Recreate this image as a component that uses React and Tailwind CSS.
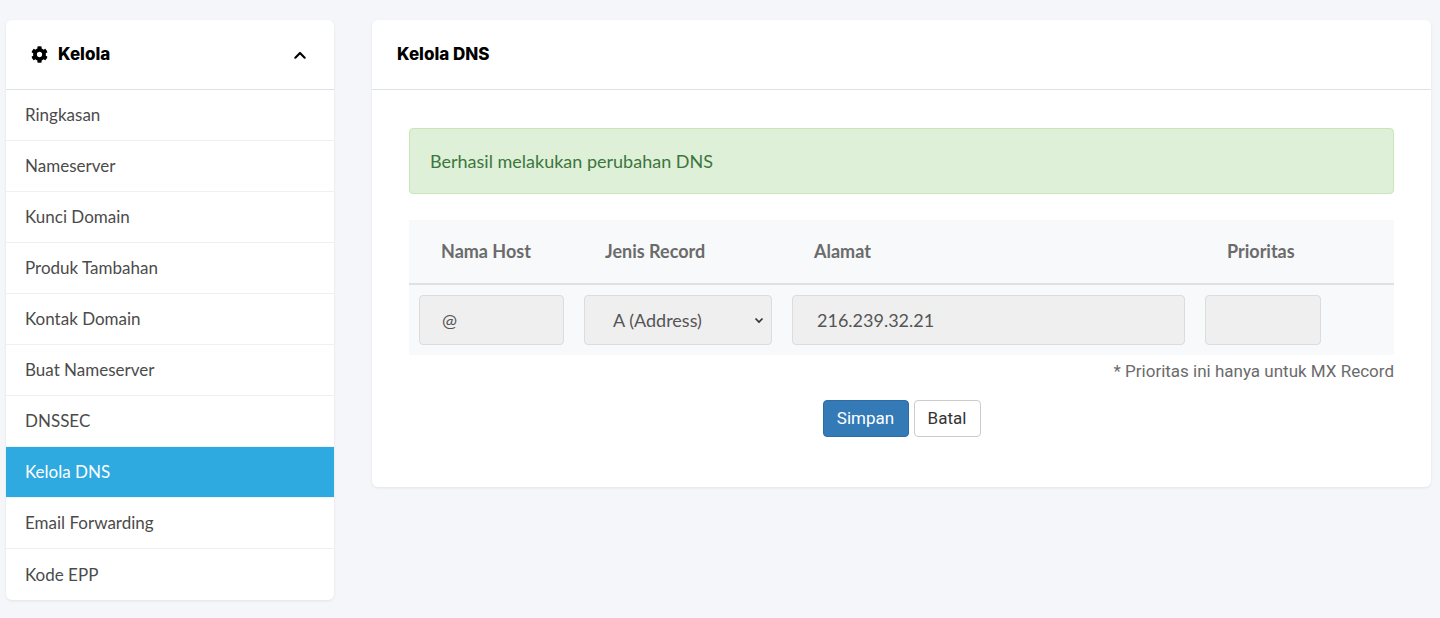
import React from "react";

const items = ["Ringkasan","Nameserver","Kunci Domain","Produk Tambahan","Kontak Domain","Buat Nameserver","DNSSEC","Kelola DNS","Email Forwarding","Kode EPP"];

export default function App() {
  return (
    <div className="min-h-[618px] bg-[#f4f6f9] flex items-start pt-5 pl-[6px] gap-[38px]" style={{fontFamily:"Lato, sans-serif"}}>
      <div className="w-[328px] bg-white rounded-md shadow-[0_1px_3px_rgba(0,0,0,0.08)] overflow-hidden">
        <div className="h-[70px] flex items-center justify-between pl-[25px] pr-[26px] border-b border-[#dee2e6]">
          <div className="flex items-center gap-[10px]">
            <svg width="17" height="17" viewBox="0 0 512 512"><path fill="#000" d="M487.4 315.7l-42.6-24.6c4.3-23.2 4.3-47 0-70.2l42.6-24.6c4.9-2.8 7.1-8.6 5.5-14-11.1-35.6-30-67.8-54.7-94.6-3.8-4.1-10-5.1-14.8-2.3L380.8 110c-17.9-15.4-38.5-27.3-60.8-35.1V25.8c0-5.6-3.9-10.5-9.4-11.7-36.7-8.2-74.3-7.8-109.2 0-5.5 1.2-9.4 6.1-9.4 11.7V75c-22.2 7.9-42.8 19.8-60.8 35.1L88.7 85.5c-4.9-2.8-11-1.9-14.8 2.3-24.7 26.7-43.6 58.9-54.7 94.6-1.7 5.4.6 11.2 5.5 14L67.3 221c-4.3 23.2-4.3 47 0 70.2l-42.6 24.6c-4.9 2.8-7.1 8.6-5.5 14 11.1 35.6 30 67.8 54.7 94.6 3.8 4.1 10 5.1 14.8 2.3l42.6-24.6c17.9 15.4 38.5 27.3 60.8 35.1v49.2c0 5.6 3.9 10.5 9.4 11.7 36.7 8.2 74.3 7.8 109.2 0 5.5-1.2 9.4-6.1 9.4-11.7v-49.2c22.2-7.9 42.8-19.8 60.8-35.1l42.6 24.6c4.9 2.8 11 1.9 14.8-2.3 24.7-26.7 43.6-58.9 54.7-94.6 1.5-5.5-.7-11.3-5.6-14.1zM256 336c-44.1 0-80-35.9-80-80s35.9-80 80-80 80 35.9 80 80-35.9 80-80 80z"/></svg>
            <span className="text-[17px] font-extrabold text-black" style={{fontFamily:"Inter, sans-serif"}}>Kelola</span>
          </div>
          <svg width="16" height="16" viewBox="0 0 24 24" fill="none" stroke="#000" strokeWidth="3.2" strokeLinecap="round" strokeLinejoin="round"><path d="M5 16l7-7 7 7"/></svg>
        </div>
        {items.map((t,i)=>(
          <div key={t} className={`h-[51px] flex items-center px-[19px] text-[17px] ${i<items.length-1?"border-b border-[#eef0f2]":""} ${t==="Kelola DNS"?"bg-[#2eaae1] text-white":"text-[#4b4b4b]"}`}>{t}</div>
        ))}
      </div>
      <div className="w-[1059px] bg-white rounded-md shadow-[0_1px_3px_rgba(0,0,0,0.08)]">
        <div className="h-[70px] flex items-center px-[25px] border-b border-[#dee2e6]">
          <span className="text-[17px] font-extrabold text-black" style={{fontFamily:"Inter, sans-serif"}}>Kelola DNS</span>
        </div>
        <div className="pt-[38px] pb-[50px] px-[37px]">
          <div className="h-[66px] bg-[#dff0d8] border border-[#c8e5bc] rounded-sm flex items-center px-5 text-[18px] text-[#3c763d]">Berhasil melakukan perubahan DNS</div>
          <div className="mt-[26px] bg-[#f8f9fa]">
            <div className="h-[65px] flex items-center text-[18px] font-bold text-[#6b6b6b] border-b-2 border-[#dee2e6]">
              <div className="w-[175px] pl-[32px]">Nama Host</div>
              <div className="w-[210px] pl-[21px]">Jenis Record</div>
              <div className="w-[413px] pl-[20px]">Alamat</div>
              <div className="pl-[20px]">Prioritas</div>
            </div>
            <div className="h-[70px] flex items-center pl-[10px] text-[18px] text-[#555]">
              <div className="w-[145px] h-[50px] bg-[#efefef] border border-[#dcdcdc] rounded flex items-center pl-[22px]">@</div>
              <div className="ml-[20px] w-[188px] h-[50px] bg-[#efefef] border border-[#dcdcdc] rounded flex items-center justify-between pl-[28px] pr-[6px]">
                <span>A (Address)</span>
                <svg width="12" height="12" viewBox="0 0 24 24" fill="none" stroke="#333" strokeWidth="3.5"><path d="M5 9l7 7 7-7"/></svg>
              </div>
              <div className="ml-[20px] w-[393px] h-[50px] bg-[#efefef] border border-[#dcdcdc] rounded flex items-center pl-[24px]">216.239.32.21</div>
              <div className="ml-[20px] w-[116px] h-[50px] bg-[#efefef] border border-[#dcdcdc] rounded"></div>
            </div>
          </div>
          <div className="text-right text-[17px] text-[#6b6b6b] mt-[5px] leading-[22px]" style={{fontFamily:"Roboto, sans-serif"}}>* Prioritas ini hanya untuk MX Record</div>
          <div className="flex justify-center gap-[5px] mt-[18px]" style={{fontFamily:"Roboto, sans-serif"}}>
            <button className="h-[37px] w-[86px] bg-[#337ab7] border border-[#2e6da4] rounded text-white text-[17px]">Simpan</button>
            <button className="h-[37px] w-[67px] bg-white border border-[#ccc] rounded text-[#333] text-[17px]">Batal</button>
          </div>
        </div>
      </div>
    </div>
  );
}
